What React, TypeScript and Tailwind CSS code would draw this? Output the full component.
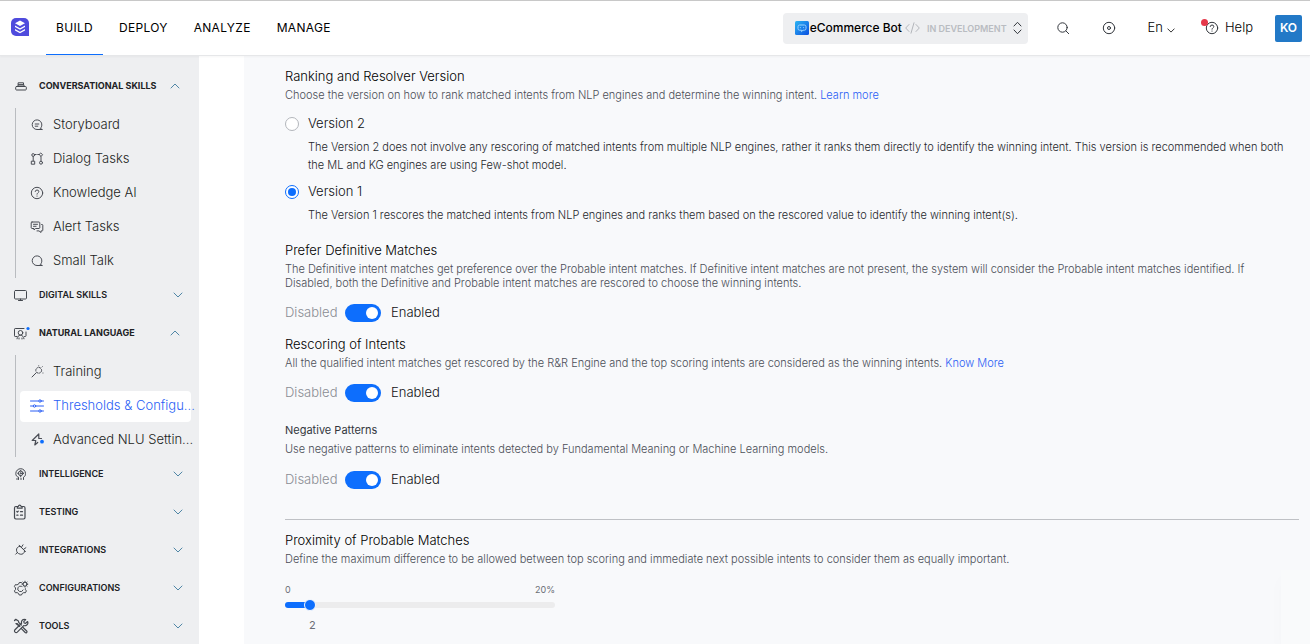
import React, { useState } from 'react';

type IconProps = { className?: string };

function Icon({ className = '', box = 16, width = 1, children }: IconProps & { box?: number; width?: number; children: React.ReactNode }) {
  return (
    <svg className={className} viewBox={`0 0 ${box} ${box}`} fill="none" stroke="currentColor" strokeWidth={width} strokeLinecap="round" strokeLinejoin="round" aria-hidden="true">
      {children}
    </svg>
  );
}

const LogoIcon = () => (
  <svg className="h-[18px] w-[18px]" viewBox="0 0 18 18" aria-hidden="true">
    <path d="M5 0h8a5 5 0 0 1 5 5v13H5a5 5 0 0 1-5-5V5a5 5 0 0 1 5-5z" fill="#4f4bdd" />
    <path d="M9 2.600l5 2.700-5 2.700-5-2.700z" fill="#fff" />
    <path d="M4 7.600l5 2.700 5-2.700v1.400l-5 2.800-5-2.800zM4 11l5 2.700 5-2.700v1.400l-5 2.800-5-2.800z" fill="#fff" />
  </svg>
);

const BotIcon = () => (
  <svg className="h-[14px] w-[14px] shrink-0" viewBox="0 0 14 14" aria-hidden="true">
    <defs>
      <linearGradient id="bot-tile" x1="0" y1="0" x2="1" y2="1">
        <stop offset="0" stopColor="#2cb5f3" />
        <stop offset="1" stopColor="#0a4fe0" />
      </linearGradient>
    </defs>
    <rect width="14" height="14" rx="1.5" fill="url(#bot-tile)" />
    <path d="M4.600 4h4.800a1.600 1.600 0 0 1 1.600 1.600v2A1.600 1.600 0 0 1 9.400 9.200H8L6.500 10.600V9.200H4.600A1.600 1.600 0 0 1 3 7.600v-2A1.600 1.600 0 0 1 4.600 4z" fill="none" stroke="#9bd4ff" strokeWidth="1" />
    <path d="M5.400 6.200v.9M8.600 6.200v.9" stroke="#9bd4ff" strokeWidth="1" />
  </svg>
);

const StackIcon = (p: IconProps) => (
  <Icon {...p}>
    <path d="M4.500 8.500h9c.5 0 .8.300.8.800v1.900c0 .4-.3.800-.8.800h-9c-.5 0-.8-.4-.8-.8V9.300c0-.5.300-.8.800-.8z" />
    <path d="M6 8.500V6.800h6v1.700M6.500 4.800h5v2h-5z" />
  </Icon>
);
const MonitorIcon = (p: IconProps) => (
  <Icon {...p}>
    <path d="M3.500 3.500h10c.6 0 1 .4 1 1v6.500c0 .6-.4 1-1 1h-10c-.6 0-1-.4-1-1V4.500c0-.6.400-1 1-1z" />
    <path d="M6.500 13.500h4M8.500 12v1.500" />
  </Icon>
);
const LanguageIcon = (p: IconProps) => (
  <Icon {...p}>
    <path d="M5 11.500H3.200a.7.700 0 0 1-.7-.7V4.200c0-.4.300-.7.700-.7H12M14 7v3.800c0 .4-.3.700-.7.700H12.500" />
    <circle cx="8.500" cy="7.800" r="2.300" />
    <path d="M5 13.800c.2-2 1.600-3.600 3.500-3.600s3.300 1.600 3.500 3.600M7 14v-1M10 14v-1" />
    <circle cx="16" cy="3.500" r="1.600" fill="#0d6efd" stroke="none" />
  </Icon>
);
const BrainIcon = (p: IconProps) => (
  <Icon {...p}>
    <path d="M6.500 13.500v-2.300c-2-.6-2.700-1.800-2.700-3.700A4.900 4.900 0 0 1 8.700 2.700a4.900 4.900 0 0 1 4.800 4.800c0 1.800-.5 3-2 3.700v2.300M5 13.500v-1" />
    <circle cx="8.700" cy="7.300" r="2.300" />
    <circle cx="8.700" cy="7.300" r=".6" />
    <path d="M8.700 4.300v.7M8.700 9.600v1.200M5.700 7.300h.7M11 7.300h.7M9 13.500v-1.200" />
  </Icon>
);
const ClipboardIcon = (p: IconProps) => (
  <Icon {...p} width={1.200}>
    <rect x="2.500" y="2.500" width="10.500" height="12.500" rx="1.400" />
    <path d="M5.300 4.200V2.500l1-.2c.2-.8.700-1.200 1.400-1.200s1.200.4 1.400 1.200l1 .2v1.700z" fill="#eeeff1" />
    <path d="M4.800 7.500l.6.600.9-1M8.500 7.700h2M4.800 11.200h1.200M8.500 11.200h2" />
  </Icon>
);
const PlugIcon = (p: IconProps) => (
  <Icon {...p}>
    <path d="M4 13l1.600-1.600M5.600 11.400c-1-1.400-1.200-3.600 0-4.900.8-.9 1.800-1.400 3-1.400l4.300 4.300c0 1.200-.5 2.200-1.400 3-1.300 1.200-4.500.8-5.900-1M7.400 4l6.400 6.400M9.700 6.100l1.600-2.500M11.800 8.200l2.400-1.700" transform="translate(-.3 -.8)" />
  </Icon>
);
const GearIcon = (p: IconProps) => (
  <Icon {...p}>
    <path d="M9.300 3.800L8.500 2.800H6.300L5.700 4.300 4 5.200l-1.600-.3-1 2 1.100 1.300v1.700l-1.100 1.300 1 1.900 1.700-.2 1.500.9.600 1.500h2.300l.7-1.500 1.600-.9 1.600.2 1-1.900-1-1.200V9" transform="translate(1 -.3)" />
    <path d="M9.500 6.200a2.800 2.800 0 1 0 1.600 3.800" />
    <circle cx="13" cy="4.200" r="2" />
    <path d="M13 1.200v1M13 6.200v1M10 4.200h1M15 4.200h.8M10.900 2.100l.7.700M14.400 5.600l.7.700M15.100 2.100l-.7.700M11.600 5.600l-.7.700" />
  </Icon>
);
const ToolsIcon = (p: IconProps) => (
  <Icon {...p} width={1.200}>
    <path d="M2.500 2.500l1.300-1.200 2.600 1.600.3 1.500 2.600 2.600M7.800 8.400L5.300 5.700l-1.400-.2z" />
    <path d="M10.800 9.200l3.900 3.800c.5.500.5 1 0 1.500s-1.100.5-1.500 0L9.400 10.600" />
    <path d="M15.600 3.500l-2 1.800-1.500-.3-.3-1.500 1.900-1.900c-1.600-.6-3.300-.1-4 1.300-.4.800-.4 1.600-.1 2.400L3 11.800c-.7.700-.7 1.700 0 2.300s1.600.6 2.300 0l6.400-6.500c1 .3 2 .2 2.800-.4 1.200-.8 1.700-2.300 1.100-3.700z" />
  </Icon>
);

const StoryIcon = (p: IconProps) => (
  <Icon {...p}>
    <path d="M13 12.500H8A4.800 4.800 0 1 1 12.800 8c0 1.300-.5 2.400-1.300 3.200zM6.200 7h3.600M6.200 9.200h2.600" />
  </Icon>
);
const FlowIcon = (p: IconProps) => (
  <Icon {...p}>
    <circle cx="4.200" cy="4" r="1.400" />
    <path d="M5.800 3.500h1.400M4.200 5.500v4.300M12 5.500v4.300M8.700 3.500h1.500" />
    <rect x="2.700" y="10.200" width="3" height="3" />
    <circle cx="12" cy="11.700" r="1.500" />
    <path d="M12 2.200l1.600 1.600L12 5.400l-1.600-1.600z" />
  </Icon>
);
const QuestionIcon = (p: IconProps) => (
  <Icon {...p}>
    <circle cx="8" cy="8" r="5.700" />
    <path d="M6.200 6.500A1.800 1.800 0 0 1 8 5a1.700 1.700 0 0 1 1.800 1.600C9.800 7.800 8 7.900 8 9.200M8 11v.2" />
  </Icon>
);
const ChatsIcon = (p: IconProps) => (
  <Icon {...p}>
    <path d="M3 3h7c.4 0 .8.400.8.800v4.900c0 .4-.4.800-.8.800H6.600L5 11V9.500H3c-.4 0-.8-.4-.8-.8V3.800c0-.4.400-.8.800-.8zM4.500 5.300h4M4.500 7.300h2.600" />
    <path d="M12.600 5.500h.6c.4 0 .6.300.6.700v5c0 .4-.2.700-.6.700h-1.200v1.600l-2-1.600H8" />
  </Icon>
);
const TalkIcon = (p: IconProps) => (
  <Icon {...p}>
    <path d="M13 12.500H8A4.800 4.800 0 1 1 12.800 8c0 1.300-.5 2.400-1.300 3.200z" />
  </Icon>
);
const WandIcon = (p: IconProps) => (
  <Icon {...p}>
    <path d="M3 13l4.300-4.300" />
    <circle cx="9.700" cy="6.300" r="2.900" strokeDasharray="1.500 1.300" />
    <path d="M13 3l.3-.3M9.700 1.900v-.1M13.900 9h.1" />
  </Icon>
);
const SlidersIcon = (p: IconProps) => (
  <Icon {...p}>
    <path d="M1.500 3h8M12.500 3h2M1.500 8h2.500M7 8h7.500M1.500 13h8M12.500 13h2" />
    <circle cx="11" cy="3" r="1.200" />
    <circle cx="5.500" cy="8" r="1.200" />
    <circle cx="11" cy="13" r="1.200" />
  </Icon>
);
const BoltIcon = (p: IconProps) => (
  <Icon {...p} width={1.200}>
    <path d="M9.800 2L3.200 8.500h3.600L5.800 13l2.900-2.500M9.800 2v4.500h2.700" />
    <circle cx="13" cy="9.700" r="1.900" fill="#0d6efd" stroke="none" />
  </Icon>
);
const SearchIcon = (p: IconProps) => (
  <Icon {...p}>
    <circle cx="7.500" cy="7.500" r="4.700" />
    <path d="M11 11l2.700 2.700" />
  </Icon>
);
const TargetIcon = (p: IconProps) => (
  <Icon {...p}>
    <circle cx="8" cy="8" r="5.700" />
    <circle cx="8" cy="8" r="1.500" />
  </Icon>
);
const ChevronIcon = ({ className = '', up = false }: IconProps & { up?: boolean }) => (
  <svg className={className} viewBox="0 0 10 6" fill="none" stroke="currentColor" strokeLinecap="round" strokeLinejoin="round" aria-hidden="true">
    <path d={up ? 'M1 5l4-4 4 4' : 'M1 1l4 4 4-4'} />
  </svg>
);

type Item = { label: string; icon: React.FC<IconProps>; active?: boolean };
type Group = { label: string; icon: React.FC<IconProps>; items?: Item[] };

const groups: Group[] = [
  {
    label: 'CONVERSATIONAL SKILLS',
    icon: StackIcon,
    items: [
      { label: 'Storyboard', icon: StoryIcon },
      { label: 'Dialog Tasks', icon: FlowIcon },
      { label: 'Knowledge AI', icon: QuestionIcon },
      { label: 'Alert Tasks', icon: ChatsIcon },
      { label: 'Small Talk', icon: TalkIcon },
    ],
  },
  { label: 'DIGITAL SKILLS', icon: MonitorIcon },
  {
    label: 'NATURAL LANGUAGE',
    icon: LanguageIcon,
    items: [
      { label: 'Training', icon: WandIcon },
      { label: 'Thresholds & Configu...', icon: SlidersIcon, active: true },
      { label: 'Advanced NLU Settin...', icon: BoltIcon },
    ],
  },
  { label: 'INTELLIGENCE', icon: BrainIcon },
  { label: 'TESTING', icon: ClipboardIcon },
  { label: 'INTEGRATIONS', icon: PlugIcon },
  { label: 'CONFIGURATIONS', icon: GearIcon },
  { label: 'TOOLS', icon: ToolsIcon },
];

function SidebarGroup({ group }: { group: Group }) {
  const GroupIcon = group.icon;
  const open = Boolean(group.items);
  return (
    <section>
      <button type="button" aria-expanded={open} className={`flex h-[34px] w-full items-center pl-3 text-left ${open ? 'mb-[5px] pr-[19px]' : 'mb-1 pr-4'}`}>
        <GroupIcon className="h-4 w-4 shrink-0 overflow-visible text-[#44484f]" />
        <span className={`ml-[11px] flex-1 text-[9px] text-[#202124] ${open ? 'font-bold' : 'font-semibold'}`}>{group.label}</span>
        <ChevronIcon up={open} className="h-[6px] w-[10px] text-[#4f86a6]" />
      </button>
      {group.items && (
        <ul className="ml-[15px] border-l border-[#b9bcc0] pr-2 pl-1">
          {group.items.map(({ label, icon: ItemIcon, active }) => (
            <li key={label} className="flex h-[34px] items-center">
              <a href="#" aria-current={active ? 'page' : undefined} className={`flex h-[31px] w-full min-w-0 items-center rounded pl-[9px] text-[13px] font-light ${active ? 'bg-white text-[#2b5ff5]' : 'text-[#1b1d21]'}`}>
                <ItemIcon className={`h-4 w-4 shrink-0 ${active ? '' : 'text-[#4a4d55]'}`} />
                <span className="ml-2 whitespace-nowrap">{label}</span>
              </a>
            </li>
          ))}
        </ul>
      )}
    </section>
  );
}

function Toggle({ label }: { label: string }) {
  const [on, setOn] = useState(true);
  return (
    <label className="flex h-5 items-center text-[13px] font-light text-[#101114]">
      <span className="w-[60px] text-[#8a8d93]">Disabled</span>
      <input
        type="checkbox"
        role="switch"
        aria-label={label}
        checked={on}
        onChange={(e) => setOn(e.target.checked)}
        className="flex h-[18px] w-9 appearance-none items-center justify-start rounded-full bg-[#9a9da3] px-[3px] before:block before:h-3 before:w-3 before:rounded-full before:bg-white checked:justify-end checked:bg-[#0d6efd]"
      />
      <span className="ml-[10px]">Enabled</span>
    </label>
  );
}

function Heading({ children }: { children: React.ReactNode }) {
  return <h2 className="text-[13px] leading-5 font-light text-black">{children}</h2>;
}

function Description({ children }: { children: React.ReactNode }) {
  return <p className="mt-0.5 pr-2 text-[11px] leading-[14px] font-light text-[#4b4e57]">{children}</p>;
}

const versions = [
  {
    id: 'v2',
    label: 'Version 2',
    text: 'The Version 2 does not involve any rescoring of matched intents from multiple NLP engines, rather it ranks them directly to identify the winning intent. This version is recommended when both the ML and KG engines are using Few-shot model.',
  },
  {
    id: 'v1',
    label: 'Version 1',
    text: 'The Version 1 rescores the matched intents from NLP engines and ranks them based on the rescored value to identify the winning intent(s).',
  },
];

function TopBar() {
  return (
    <header className="relative z-10 flex h-14 shrink-0 items-center border-t border-b border-t-[#c8c8c8] border-b-[#e6e7e9] bg-white pl-[11px] shadow-[0_1px_2px_rgba(0,0,0,0.04)]">
      <a href="#" aria-label="Home" className="pb-[3px]">
        <LogoIcon />
      </a>
      <nav className="ml-[17px] flex h-full gap-[6px] text-[12px] tracking-wide text-black">
        {['BUILD', 'DEPLOY', 'ANALYZE', 'MANAGE'].map((tab, i) => (
          <a key={tab} href="#" className={`flex items-center border-b px-[10px] ${i === 0 ? 'border-[#0d6efd]' : 'border-transparent'}`}>
            {tab}
          </a>
        ))}
      </nav>
      <div className="ml-auto flex items-center text-[13px] font-light text-black">
        <button type="button" className="flex h-[31px] items-center rounded bg-[#eeeff1] pr-[6px] pl-3">
          <BotIcon />
          <span className="ml-px text-[12px] font-medium text-black">eCommerce Bot</span>
          <svg className="ml-[3px] h-3 w-[15px] text-[#b3b6bb]" viewBox="0 0 15 12" fill="none" stroke="currentColor" strokeLinecap="round" aria-hidden="true">
            <path d="M4 2.500L.7 6 4 9.500M11 2.500L14.300 6 11 9.500M9 .8L6 11.200" />
          </svg>
          <span className="ml-[7px] pt-px text-[9px] font-semibold text-[#b9bcc1]">IN DEVELOPMENT</span>
          <svg className="ml-[6px] h-[14px] w-[9px]" viewBox="0 0 9 14" fill="none" stroke="#33373d" strokeLinecap="round" strokeLinejoin="round" aria-hidden="true">
            <path d="M1 5l3.500-3.700L8 5M1 9l3.500 3.700L8 9" />
          </svg>
        </button>
        <button type="button" aria-label="Search" className="ml-[27px] text-[#33373d]">
          <SearchIcon className="h-4 w-4" />
        </button>
        <button type="button" aria-label="Focus" className="ml-[30px] text-[#33373d]">
          <TargetIcon className="h-4 w-4" />
        </button>
        <button type="button" className="ml-[31px] flex items-center">
          En
          <ChevronIcon className="mt-1 ml-1 h-[5px] w-2" />
        </button>
        <button type="button" className="ml-[29px] flex items-center">
          <span className="relative mr-[5px] text-[#33373d]">
            <QuestionIcon className="h-4 w-4" />
            <span className="absolute -top-px -left-[3px] h-[7px] w-[7px] rounded-full bg-[#e5384a]" />
          </span>
          Help
        </button>
        <button type="button" className="mr-2 ml-[22px] h-[27px] w-[27px] rounded-[2px] bg-[#2279c7] text-[12px] font-semibold text-white">KO</button>
      </div>
    </header>
  );
}

export default function App() {
  const [version, setVersion] = useState('v1');
  const [proximity, setProximity] = useState(2);
  const fill = (proximity / 20) * 100;
  return (
    <div className="relative flex h-screen flex-col overflow-hidden bg-white font-[Inter,sans-serif]">
      <TopBar />
      <div className="flex min-h-0 flex-1">
        <aside className="w-[199px] shrink-0 overflow-hidden bg-[#eeeff1] pt-[13px]">
          {groups.map((g) => (
            <SidebarGroup key={g.label} group={g} />
          ))}
        </aside>
        <main className="ml-[45px] min-w-0 flex-1 overflow-hidden bg-[#f8f9fb] pt-[10px] pr-[11px] pl-[41px]">
          <section>
            <Heading>Ranking and Resolver Version</Heading>
            <Description>
              Choose the version on how to rank matched intents from NLP engines and determine the winning intent.{' '}
              <a href="#" className="text-[#2b5ff5]">Learn more</a>
            </Description>
            <div className="mt-3 flex flex-col gap-2">
              {versions.map((v) => (
                <div key={v.id}>
                  <label className="flex h-5 items-center gap-[9px] text-[13px] font-light text-[#101114]">
                    <input
                      type="radio"
                      name="version"
                      checked={version === v.id}
                      onChange={() => setVersion(v.id)}
                      className="flex h-[14px] w-[14px] appearance-none items-center justify-center rounded-full border border-[#b3b6bb] bg-white checked:border-[#0d6efd] checked:before:h-2 checked:before:w-2 checked:before:rounded-full checked:before:bg-[#0d6efd]"
                    />
                    {v.label}
                  </label>
                  <p className="mt-1 ml-[23px] pr-2 text-[11px] leading-[18px] font-light text-[#25272c]">{v.text}</p>
                </div>
              ))}
            </div>
          </section>
          <section className="mt-4">
            <Heading>Prefer Definitive Matches</Heading>
            <Description>
              The Definitive intent matches get preference over the Probable intent matches. If Definitive intent matches are not present, the system will consider the Probable intent matches identified. If Disabled, both the Definitive and Probable intent matches are rescored to choose the winning intents.
            </Description>
            <div className="mt-[13px]">
              <Toggle label="Prefer Definitive Matches" />
            </div>
          </section>
          <section className="mt-[11px]">
            <Heading>Rescoring of Intents</Heading>
            <Description>
              All the qualified intent matches get rescored by the R&amp;R Engine and the top scoring intents are considered as the winning intents.{' '}
              <a href="#" className="text-[#2b5ff5]">Know More</a>
            </Description>
            <div className="mt-[13px]">
              <Toggle label="Rescoring of Intents" />
            </div>
          </section>
          <section className="mt-[17px]">
            <h3 className="text-[11px] leading-5 font-normal text-[#33373d]">Negative Patterns</h3>
            <Description>Use negative patterns to eliminate intents detected by Fundamental Meaning or Machine Learning models.</Description>
            <div className="mt-[14px]">
              <Toggle label="Negative Patterns" />
            </div>
          </section>
          <hr className="mt-[29px] border-[#bfc1c5]" />
          <section className="mt-[10px]">
            <Heading>Proximity of Probable Matches</Heading>
            <Description>Define the maximum difference to be allowed between top scoring and immediate next possible intents to consider them as equally important.</Description>
            <div className="mt-[17px] w-[270px] text-[#6b6e76]">
              <div className="flex justify-between text-[9px] leading-[14px]">
                <span>0</span>
                <span>20%</span>
              </div>
              <div
                className="mt-[5px] flex h-[6px] items-center rounded-full"
                style={{ background: `linear-gradient(to right, #0d6efd ${fill}%, #ececed ${fill}%)` }}
              >
                <input
                  type="range"
                  min={0}
                  max={20}
                  value={proximity}
                  onChange={(e) => setProximity(Number(e.target.value))}
                  aria-label="Proximity of Probable Matches"
                  className="-ml-2 h-3 w-[278px] shrink-0 appearance-none bg-transparent [&::-webkit-slider-thumb]:h-3 [&::-webkit-slider-thumb]:w-3 [&::-webkit-slider-thumb]:appearance-none [&::-webkit-slider-thumb]:rounded-full [&::-webkit-slider-thumb]:border [&::-webkit-slider-thumb]:border-[#f8f9fb] [&::-webkit-slider-thumb]:bg-[#0d6efd]"
                />
              </div>
              <output className="mt-[10px] ml-6 block text-[11px] leading-[14px]">{proximity}</output>
            </div>
          </section>
        </main>
      </div>
      <div className="absolute right-0 bottom-0 h-[74px] w-[29px] bg-[#f9fafb] shadow-[0_8px_18px_rgba(0,0,0,0.02)]" />
    </div>
  );
}
